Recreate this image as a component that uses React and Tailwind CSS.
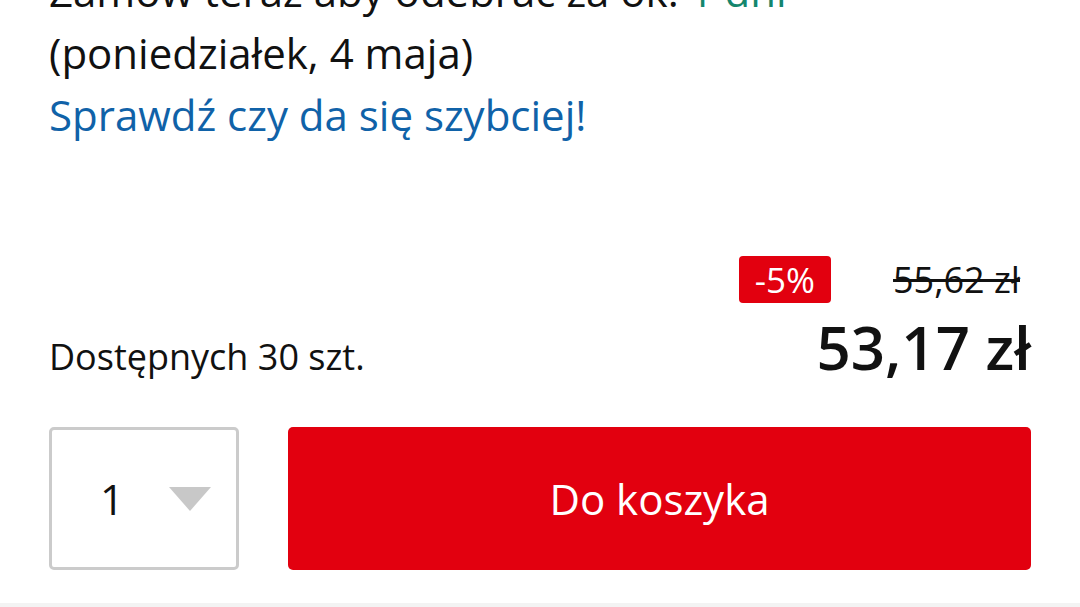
import React from 'react';

const font = { fontFamily: '"Open Sans", "Noto Sans", sans-serif' };

const App = () => {
  return (
    <div className="w-[1080px] h-[607px] bg-white overflow-hidden relative" style={font}>
      <div className="px-[49px]">
        {/* Delivery info */}
        <div className="-mt-[40px] text-[42px] leading-[62px] text-[#111]">
          <p>
            Zamów teraz aby odebrać za ok. <span className="text-[#14866d]">1 dni</span>
          </p>
          <p>(poniedziałek, 4 maja)</p>
          <p className="text-[#1062a8]">Sprawdź czy da się szybciej!</p>
        </div>

        {/* Price block */}
        <div className="mt-[110px] flex justify-end items-center gap-[62px] pr-[11px] h-[47px]">
          <span className="bg-[#e2000f] text-white text-[35px] leading-[47px] h-[47px] px-[16px] rounded-[4px]">
            -5%
          </span>
          <span className="text-[36px] text-[#111] line-through decoration-[3px]">55,62 zł</span>
        </div>
        <div className="flex justify-between items-baseline mt-[4px]">
          <span className="text-[36px] text-[#111]">Dostępnych 30 szt.</span>
          <span className="text-[60px] font-semibold text-[#111] leading-[80px]">53,17 zł</span>
        </div>

        {/* Add to cart */}
        <div className="mt-[40px] flex gap-[49px] h-[143px]">
          <div className="w-[190px] shrink-0 border-[3px] border-[#cbcbcb] rounded-[5px] flex items-center pl-[48px] gap-[45px]">
            <span className="text-[42px] text-[#111]">1</span>
            <svg width="42" height="24" viewBox="0 0 42 24">
              <polygon points="0,0 42,0 21,24" fill="#c8c8c8" />
            </svg>
          </div>
          <button className="flex-1 bg-[#e2000f] rounded-[5px] text-white text-[42px]">
            Do koszyka
          </button>
        </div>
      </div>
      <div className="absolute left-0 right-0 bottom-0 h-[4px] bg-[#f3f3f3]" />
    </div>
  );
};

export default App;
